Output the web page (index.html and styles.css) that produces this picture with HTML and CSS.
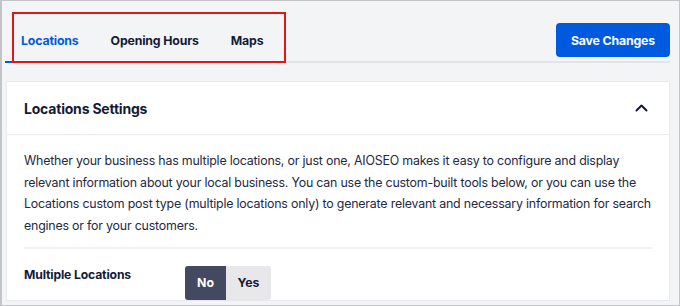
FILE: index.html
```html
<!DOCTYPE html>
<html lang="en">
<head>
    <meta charset="UTF-8">
    <title>Local Business - Locations</title>
    <link rel="stylesheet" href="styles.css">
</head>
<body>
    <div class="frame">
        <div class="topbar">
            <nav class="tabs">
                <a class="tab active">Locations</a>
                <a class="tab">Opening Hours</a>
                <a class="tab">Maps</a>
            </nav>
            <button class="save">Save Changes</button>
            <!-- highlight box drawn over the tabs -->
            <div class="highlight"></div>
        </div>

        <div class="card">
            <div class="card-header">
                <h2>Locations Settings</h2>
                <svg class="chevron" width="13" height="8" viewBox="0 0 13 8">
                    <path d="M1.5 6.5 L6.5 1.5 L11.5 6.5" fill="none" stroke="#141b38" stroke-width="2" stroke-linecap="round" stroke-linejoin="round"/>
                </svg>
            </div>
            <div class="card-body">
                <p class="desc">Whether your business has multiple locations, or just one, AIOSEO makes it easy to configure and display relevant information about your local business. You can use the custom-built tools below, or you can use the Locations custom post type (multiple locations only) to generate relevant and necessary information for search engines or for your customers.</p>
                <div class="setting">
                    <div class="setting-label">Multiple Locations</div>
                    <div class="toggle">
                        <span class="opt on">No</span>
                        <span class="opt">Yes</span>
                    </div>
                </div>
            </div>
        </div>
    </div>
</body>
</html>
```

FILE: styles.css
```css
* {
    box-sizing: border-box;
}

body {
    margin: 0;
    font-family: Inter, 'Liberation Sans', sans-serif;
    color: #141b38;
    background-color: #fff;
}

.frame {
    width: 680px;
    height: 306px;
    overflow: hidden;
    background-color: #f3f4f5;
    border: 1px solid #c3c4c7;
    border-left-width: 2px;
    padding: 0 9px 0 3px;
}

.topbar {
    position: relative;
    display: flex;
    justify-content: space-between;
    height: 62px;
    border-bottom: 2px solid #e2e4e9;
}

.tabs {
    display: flex;
    padding-top: 18px;
}

.tab {
    display: flex;
    align-items: center;
    padding: 0 16px;
    margin-bottom: -2px;
    font-size: 12.3px;
    font-weight: 700;
    letter-spacing: -0.15px;
    color: #141b38;
    border-bottom: 2px solid transparent;
}

.tab.active {
    color: #005ae0;
    border-bottom-color: #005ae0;
}

.save {
    align-self: flex-end;
    height: 34px;
    margin-bottom: 4px;
    padding: 0 15px;
    border: none;
    border-radius: 4px;
    background-color: #005ae0;
    color: #fff;
    font-family: inherit;
    font-size: 12.3px;
    font-weight: 700;
    letter-spacing: -0.15px;
}

.highlight {
    position: absolute;
    left: 7px;
    top: 11px;
    width: 274px;
    height: 51px;
    border: 2px solid #e3131b;
}

.card {
    margin-top: 18px;
    margin-left: 1px;
    background-color: #fff;
    border: 1px solid #e8e9ec;
}

.card-header {
    display: flex;
    justify-content: space-between;
    align-items: center;
    height: 53px;
    padding: 0 21px 0 17px;
    border-bottom: 1px solid #ececef;
}

.card-header h2 {
    margin: 0;
    font-size: 14px;
    font-weight: 700;
    letter-spacing: -0.2px;
}

.chevron {
    display: block;
}

.card-body {
    padding: 15px 17px 0;
}

.desc {
    margin: 0;
    padding-bottom: 10px;
    font-size: 12.4px;
    line-height: 21.7px;
    letter-spacing: -0.2px;
    color: #232942;
    border-bottom: 2px solid #f1f1f3;
}

.setting {
    display: flex;
    align-items: flex-start;
    padding-top: 17px;
}

.setting-label {
    width: 161px;
    padding-top: 1px;
    font-size: 12.2px;
    font-weight: 700;
    letter-spacing: -0.15px;
}

.toggle {
    display: flex;
    height: 34px;
    border-radius: 3px;
    overflow: hidden;
    background-color: #e8e8eb;
}

.opt {
    display: flex;
    align-items: center;
    justify-content: center;
    font-size: 12.3px;
    font-weight: 700;
    color: #141b38;
}

.opt:first-child {
    width: 41px;
}

.opt:last-child {
    width: 45px;
}

.opt.on {
    background-color: #434960;
    color: #fff;
}
```
